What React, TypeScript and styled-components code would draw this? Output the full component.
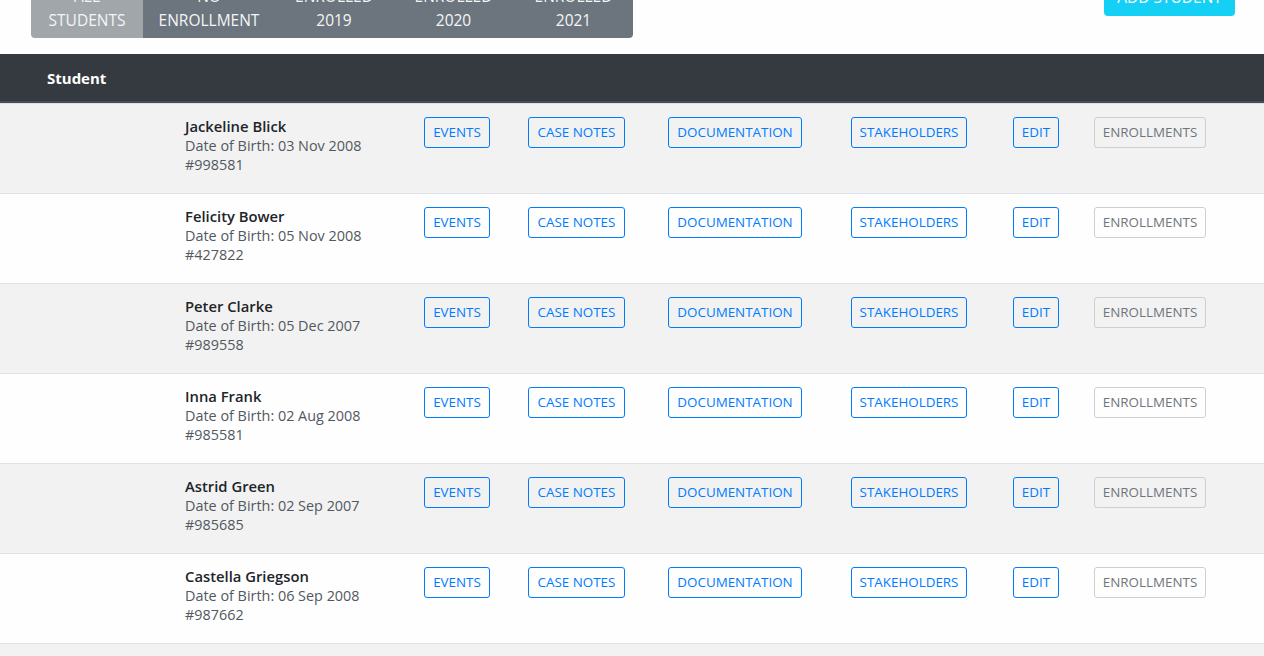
import React from "react";
import styled, { createGlobalStyle } from "styled-components";

const Global = createGlobalStyle`
  html, body { margin: 0; padding: 0; background: #fefefe; overflow: hidden; }
  body { font-family: "Open Sans", "Noto Sans", Arial, sans-serif; color: #212529; }
  * { box-sizing: border-box; }
`;

const Page = styled.div`
  margin-top: -22px;
`;

const Toolbar = styled.div`
  display: flex;
  justify-content: space-between;
  align-items: flex-start;
  padding: 0 29px 0 31px;
  margin-bottom: 16px;
`;

const TabGroup = styled.div`
  display: flex;
  border-radius: 4px;
  overflow: hidden;
`;

const Tab = styled.button<{ $active?: boolean; $width: number }>`
  border: none;
  margin: 0;
  font-family: inherit;
  font-size: 15.5px;
  line-height: 24px;
  padding: 6px 0;
  width: ${(p) => p.$width}px;
  text-align: center;
  text-transform: uppercase;
  color: #f4f5f6;
  background: ${(p) => (p.$active ? "#a1a6ab" : "#6c757d")};
`;

const AddButton = styled.button`
  border: none;
  border-radius: 4px;
  background: #14d0f5;
  color: #fff;
  font-family: inherit;
  font-size: 15.5px;
  line-height: 24px;
  padding: 7px 0;
  width: 131px;
  text-transform: uppercase;
`;

const cols = "173px 239px 104px 140px 183px 162px 81px 1fr";

const HeadRow = styled.div`
  background: #343a40;
  border-bottom: 2px solid #454d55;
  height: 49px;
  display: flex;
  align-items: center;
  padding-left: 47px;
  color: #fff;
  font-weight: 700;
  font-size: 15px;
`;

const Row = styled.div<{ $striped?: boolean }>`
  display: grid;
  grid-template-columns: ${cols};
  border-top: 1px solid #dee2e6;
  background: ${(p) => (p.$striped ? "#f2f2f2" : "#fefefe")};
  height: 90px;
`;

const Cell = styled.div`
  padding: 13px 12px 0;
`;

const Name = styled.div`
  font-weight: 600;
  font-size: 14.8px;
  line-height: 19px;
  color: #212529;
`;

const Info = styled.div`
  font-size: 14.4px;
  line-height: 19px;
  color: #52585e;
`;

const ActionButton = styled.button<{ $muted?: boolean; $w: number }>`
  display: inline-block;
  font-family: inherit;
  font-size: 13.4px;
  line-height: 21px;
  padding: 4px 0;
  width: ${(p) => p.$w}px;
  text-align: center;
  background: transparent;
  border-radius: 3px;
  text-transform: uppercase;
  border: 1px solid ${(p) => (p.$muted ? "#cfcfcf" : "#007bff")};
  color: ${(p) => (p.$muted ? "#6f757b" : "#007bff")};
`;

const students = [
  { name: "Jackeline Blick", dob: "03 Nov 2008", id: "#998581" },
  { name: "Felicity Bower", dob: "05 Nov 2008", id: "#427822" },
  { name: "Peter Clarke", dob: "05 Dec 2007", id: "#989558" },
  { name: "Inna Frank", dob: "02 Aug 2008", id: "#985581" },
  { name: "Astrid Green", dob: "02 Sep 2007", id: "#985685" },
  { name: "Castella Griegson", dob: "06 Sep 2008", id: "#987662" },
  { name: "", dob: "", id: "" },
];

const actions = [
  { label: "Events", w: 66 },
  { label: "Case Notes", w: 97 },
  { label: "Documentation", w: 134 },
  { label: "Stakeholders", w: 116 },
  { label: "Edit", w: 46 },
];

const tabs = [
  { l1: "All", l2: "Students", w: 112, active: true },
  { l1: "No", l2: "Enrollment", w: 132 },
  { l1: "Enrolled", l2: "2019", w: 118 },
  { l1: "Enrolled", l2: "2020", w: 121 },
  { l1: "Enrolled", l2: "2021", w: 119 },
];

export default function App() {
  return (
    <Page>
      <Global />
      <Toolbar>
        <TabGroup>
          {tabs.map((t) => (
            <Tab key={t.l1 + t.l2} $active={t.active} $width={t.w}>
              {t.l1}
              <br />
              {t.l2}
            </Tab>
          ))}
        </TabGroup>
        <AddButton>Add Student</AddButton>
      </Toolbar>
      <HeadRow>Student</HeadRow>
      {students.map((s, i) => (
        <Row key={i} $striped={i % 2 === 0}>
          <Cell />
          <Cell>
            {s.name && (
              <>
                <Name>{s.name}</Name>
                <Info>Date of Birth: {s.dob}</Info>
                <Info>{s.id}</Info>
              </>
            )}
          </Cell>
          {s.name &&
            actions.map((a) => (
              <Cell key={a.label}>
                <ActionButton $w={a.w}>{a.label}</ActionButton>
              </Cell>
            ))}
          {s.name && (
            <Cell>
              <ActionButton $muted $w={112}>
                Enrollments
              </ActionButton>
            </Cell>
          )}
        </Row>
      ))}
    </Page>
  );
}
